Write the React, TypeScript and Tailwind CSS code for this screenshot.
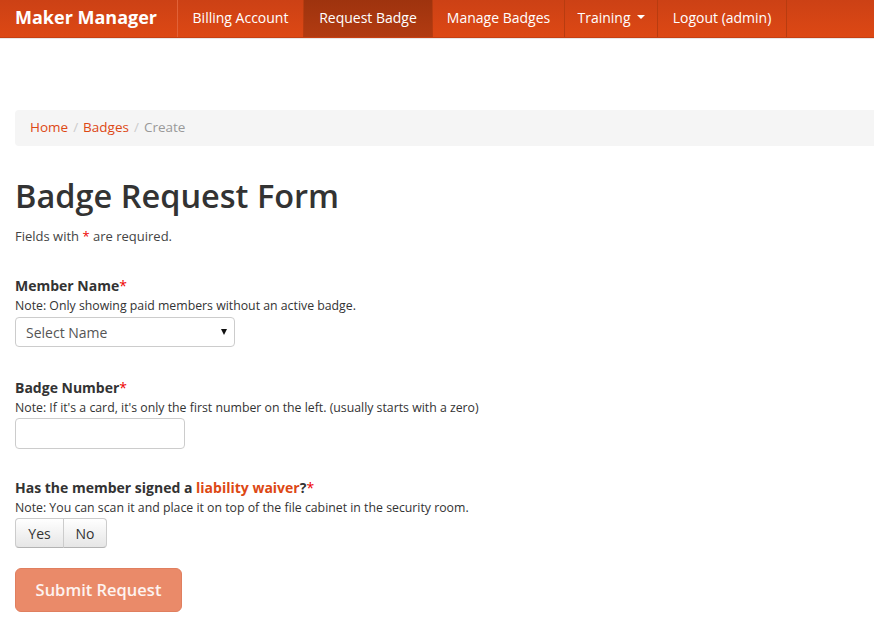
import React from "react";

const font = { fontFamily: "'Open Sans', 'Noto Sans', sans-serif" };

function NavItem({ label, w, active, caret }: { label: string; w: string; active?: boolean; caret?: boolean }) {
  return (
    <div
      className={`${w} h-full flex items-center justify-center pb-[3px] text-[14px] text-white border-r border-[#b83c10] ${
        active ? "bg-gradient-to-b from-[#9e330e] to-[#b23b11]" : ""
      }`}
    >
      {label}
      {caret && (
        <span className="ml-[6px] inline-block w-0 h-0 border-l-[4px] border-r-[4px] border-t-[4px] border-l-transparent border-r-transparent border-t-white" />
      )}
    </div>
  );
}

export default function App() {
  return (
    <div className="min-h-[621px] bg-white text-[#333]" style={font}>
      <div className="h-[38px] flex bg-gradient-to-b from-[#cc4115] to-[#dd4814] border-b border-[#c63f12] shadow-[0_1px_0_#e8e8e8]">
        <div className="w-[178px] h-full flex items-center pb-[3px] pl-[15px] text-[18px] font-bold text-white border-r border-[#e26238]">
          Maker Manager
        </div>
        <NavItem label="Billing Account" w="w-[126px]" />
        <NavItem label="Request Badge" w="w-[129px]" active />
        <NavItem label="Manage Badges" w="w-[132px]" />
        <NavItem label="Training" w="w-[93px]" caret />
        <NavItem label="Logout (admin)" w="w-[129px]" />
      </div>

      <div className="pl-[15px] pt-[72px]">
        <div className="h-[36px] bg-[#f5f5f5] rounded-l-[4px] flex items-center pl-[15px] pb-[1px] text-[13.5px]">
          <span className="text-[#dd4814]">Home</span>
          <span className="text-[#ccc] px-[5px]">/</span>
          <span className="text-[#dd4814]">Badges</span>
          <span className="text-[#ccc] px-[5px]">/</span>
          <span className="text-[#999]">Create</span>
        </div>

        <h1 className="mt-[30px] text-[32.5px] font-semibold leading-[40px] text-[#333]">Badge Request Form</h1>
        <p className="mt-[10px] text-[13px] leading-[20px] text-[#444]">
          Fields with <span className="text-[#e00]">*</span> are required.
        </p>

        <div className="mt-[30px]">
          <div className="text-[14px] font-bold leading-[20px]">
            Member Name<span className="text-[#e00] font-normal">*</span>
          </div>
          <div className="text-[12.3px] leading-[16px] mt-[2px]">Note: Only showing paid members without an active badge.</div>
          <div className="mt-[3px] w-[220px] h-[30px] border border-[#ccc] rounded-[4px] flex items-center justify-between pl-[10px] pr-[7px] text-[14px] text-[#555]">
            <span>Select Name</span>
            <span className="inline-block w-0 h-0 border-l-[3.5px] border-r-[3.5px] border-t-[6px] border-l-transparent border-r-transparent border-t-[#111]" />
          </div>
        </div>

        <div className="mt-[31px]">
          <div className="text-[14px] font-bold leading-[20px]">
            Badge Number<span className="text-[#e00] font-normal">*</span>
          </div>
          <div className="text-[12.3px] leading-[16px] mt-[2px]">
            Note: If it's a card, it's only the first number on the left. (usually starts with a zero)
          </div>
          <div className="mt-[2px] w-[170px] h-[31px] border border-[#ccc] rounded-[4px] bg-white" />
        </div>

        <div className="mt-[29px]">
          <div className="text-[14px] font-bold leading-[20px]">
            Has the member signed a <span className="text-[#dd4814]">liability waiver</span>?
            <span className="text-[#e00] font-normal">*</span>
          </div>
          <div className="text-[12.3px] leading-[16px] mt-[2px]">
            Note: You can scan it and place it on top of the file cabinet in the security room.
          </div>
          <div className="mt-[2px] flex h-[30px] text-[14px]">
            <div className="w-[49px] flex items-center justify-center border border-[#ccc] border-b-[#b3b3b3] rounded-l-[4px] bg-gradient-to-b from-white to-[#e6e6e6]">
              Yes
            </div>
            <div className="w-[44px] -ml-px flex items-center justify-center border border-[#ccc] border-b-[#b3b3b3] rounded-r-[4px] bg-gradient-to-b from-white to-[#e6e6e6]">
              No
            </div>
          </div>
        </div>

        <div className="mt-[20px] w-[167px] h-[44px] rounded-[6px] bg-[#ea8a69] border border-[#e07f5f] flex items-center justify-center text-[16.5px] font-semibold text-white/90">
          Submit Request
        </div>
      </div>
    </div>
  );
}
